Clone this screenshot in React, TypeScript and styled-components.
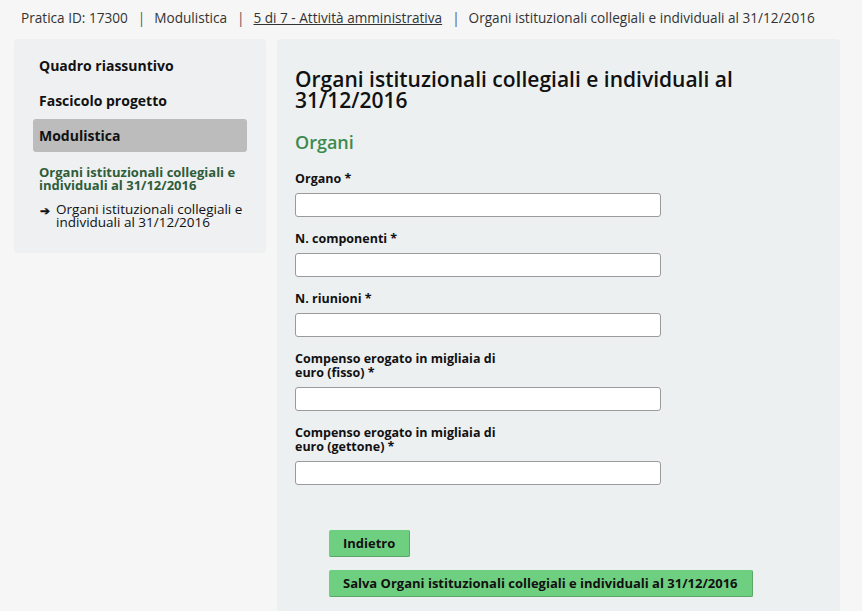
import React from 'react'
import styled, { createGlobalStyle } from 'styled-components'

const GlobalStyle = createGlobalStyle`
  html, body {
    margin: 0;
    padding: 0;
    background: #f6f6f6;
    font-family: "Open Sans", "DejaVu Sans", sans-serif;
    color: #222;
  }
`

const Page = styled.div`
  width: 862px;
  height: 611px;
  overflow: hidden;
  background: #f6f6f6;
`

const Breadcrumb = styled.div`
  height: 39px;
  display: flex;
  align-items: center;
  padding-left: 21px;
  font-size: 13.6px;
  color: #333;
  white-space: pre;
  padding-bottom: 5px;
  box-sizing: border-box;
`

const Crumb = styled.span<{ link?: boolean }>`
  text-decoration: ${p => (p.link ? 'underline' : 'none')};
`

const Sep = styled.span`
  padding: 0 9px 0 10px;
  color: #555;
`

const Columns = styled.div`
  display: flex;
  align-items: flex-start;
  gap: 11px;
  padding-left: 14px;
`

const Sidebar = styled.div`
  width: 252px;
  background: #eef0f1;
  border-radius: 4px;
  padding: 10px 19px 24px;
  box-sizing: border-box;
`

const NavItem = styled.div<{ active?: boolean }>`
  height: 33px;
  display: flex;
  align-items: center;
  padding-left: 6px;
  margin-bottom: 2px;
  font-size: 14px;
  font-weight: 700;
  color: #111;
  border-radius: 3px;
  background: ${p => (p.active ? '#bcbcbc' : 'transparent')};
`

const SubTitle = styled.div`
  margin: 14px 0 0 6px;
  font-size: 13px;
  font-weight: 700;
  line-height: 13px;
  color: #2f5c3a;
`

const SubLink = styled.div`
  display: flex;
  gap: 6px;
  margin: 11px 0 0 7px;
  font-size: 13.5px;
  line-height: 13px;
  color: #111;
`

const Arrow = styled.span`
  font-size: 12px;
  font-weight: 700;
  padding-top: 1px;
  -webkit-text-stroke: 0.4px #111;
`

const Main = styled.div`
  width: 563px;
  height: 580px;
  background: #edf0f1;
  border-radius: 4px 4px 0 0;
  padding: 30px 19px 0 18px;
  box-sizing: border-box;
`

const Title = styled.h1`
  margin: 0;
  font-size: 21px;
  font-weight: 600;
  line-height: 21px;
  color: #111;
`

const Section = styled.h2`
  margin: 19px 0 0;
  font-size: 18px;
  font-weight: 600;
  color: #3c8a4e;
`

const Fields = styled.div`
  display: flex;
  flex-direction: column;
  gap: 15px;
  margin-top: 18px;
`

const Label = styled.label`
  display: block;
  width: 215px;
  font-size: 12.5px;
  font-weight: 700;
  line-height: 14px;
  color: #111;
  margin-bottom: 7px;
`

const Input = styled.input`
  display: block;
  width: 366px;
  height: 24px;
  box-sizing: border-box;
  border: 1px solid #9a9a9a;
  border-radius: 3px;
  background: #fff;
  margin: 0;
`

const Actions = styled.div`
  display: flex;
  flex-direction: column;
  align-items: flex-start;
  gap: 13px;
  margin: 45px 0 0 34px;
`

const Button = styled.button`
  height: 27px;
  padding: 0 14px;
  background: #6fcf80;
  border: none;
  border-right: 1px solid #59a866;
  border-bottom: 1px solid #59a866;
  border-radius: 2px;
  font-family: inherit;
  font-size: 13px;
  font-weight: 700;
  color: #111;
`

const fields = [
  'Organo *',
  'N. componenti *',
  'N. riunioni *',
  'Compenso erogato in migliaia di euro (fisso) *',
  'Compenso erogato in migliaia di euro (gettone) *',
]

export default function App() {
  return (
    <Page>
      <GlobalStyle />
      <Breadcrumb>
        <Crumb>Pratica ID: 17300</Crumb>
        <Sep>|</Sep>
        <Crumb>Modulistica</Crumb>
        <Sep>|</Sep>
        <Crumb link>5 di 7 - Attività amministrativa</Crumb>
        <Sep>|</Sep>
        <Crumb>Organi istituzionali collegiali e individuali al 31/12/2016</Crumb>
      </Breadcrumb>
      <Columns>
        <Sidebar>
          <NavItem>Quadro riassuntivo</NavItem>
          <NavItem>Fascicolo progetto</NavItem>
          <NavItem active>Modulistica</NavItem>
          <SubTitle>Organi istituzionali collegiali e individuali al 31/12/2016</SubTitle>
          <SubLink>
            <Arrow>➔</Arrow>
            <span>Organi istituzionali collegiali e individuali al 31/12/2016</span>
          </SubLink>
        </Sidebar>
        <Main>
          <Title>Organi istituzionali collegiali e individuali al 31/12/2016</Title>
          <Section>Organi</Section>
          <Fields>
            {fields.map((f, i) => (
              <div key={i}>
                <Label>{f}</Label>
                <Input type="text" />
              </div>
            ))}
          </Fields>
          <Actions>
            <Button>Indietro</Button>
            <Button>Salva Organi istituzionali collegiali e individuali al 31/12/2016</Button>
          </Actions>
        </Main>
      </Columns>
    </Page>
  )
}
